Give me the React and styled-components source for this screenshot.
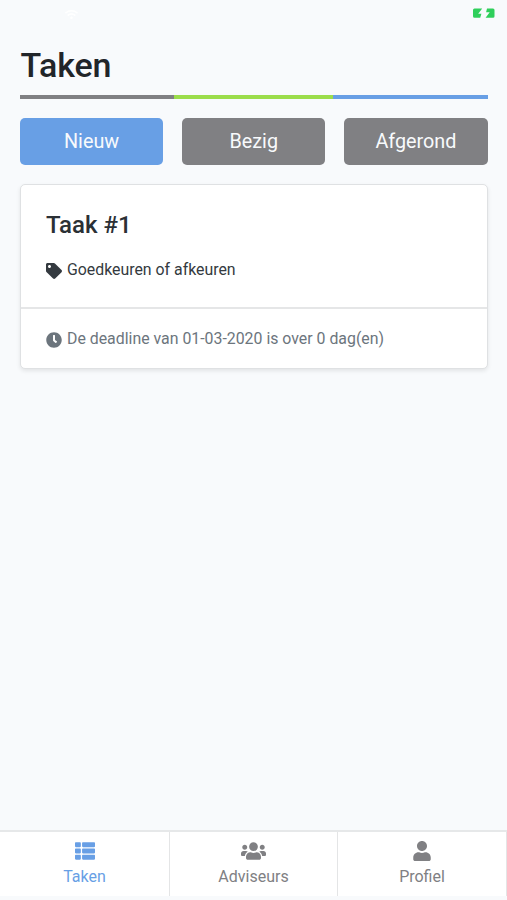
import React from "react";
import styled, { createGlobalStyle } from "styled-components";
import { FaTag, FaClock, FaThList, FaUsers, FaUser, FaWifi } from "react-icons/fa";

const GlobalStyle = createGlobalStyle`
  * { box-sizing: border-box; }
  body { margin: 0; background: #f8fafc; font-family: Roboto, sans-serif; }
`;

const Screen = styled.div`
  display: flex;
  flex-direction: column;
  height: 900px;
  background: #f8fafc;
  color: #212529;
`;

const StatusBar = styled.div`
  display: flex;
  justify-content: space-between;
  height: 32px;
  padding: 8px 12px 0 65px;
  color: #fff;
`;

const Main = styled.main`
  flex: 1;
  padding: 12px 19.5px 0 20px;
`;

const Title = styled.h1`
  margin: 0 0 9px 0.5px;
  font-size: 34px;
  font-weight: 500;
  line-height: 42px;
  letter-spacing: -0.1px;
`;

const Stripe = styled.div`
  display: grid;
  grid-template-columns: 154px 159px 1fr;
  height: 4px;
`;

const StripePart = styled.span`
  background: ${(p) => p.$color};
`;

const Filters = styled.div`
  display: grid;
  grid-template-columns: repeat(3, 1fr);
  gap: 19px;
  margin: 19px 0;
`;

const FilterButton = styled.button`
  height: 47px;
  padding: 0 0 1px;
  border: 0;
  border-radius: 5px;
  background: ${(p) => (p.$active ? "#689fe5" : "#808083")};
  color: #f8fafc;
  font: 400 19.8px Roboto, sans-serif;
`;

const Card = styled.article`
  height: 185px;
  border: 1px solid #dfe1e3;
  border-radius: 5px;
  background: #fff;
  box-shadow: 0 2px 4px rgba(0, 0, 0, 0.09);
`;

const CardBody = styled.div`
  height: 124px;
  padding: 25px 25px 0;
  border-bottom: 2px solid #e5e6e7;
`;

const CardTitle = styled.h2`
  margin: 0 0 20px;
  color: #2b3035;
  font-size: 24px;
  font-weight: 500;
  line-height: 30px;
`;

const IconLine = styled.div`
  display: flex;
  align-items: center;
  gap: 5px;
  font-size: 15.87px;
  line-height: 20px;
  color: ${(p) => p.$color};

  svg { flex: none; margin-top: 2px; }
`;

const CardFooter = styled.div`
  padding: 20px 25px;
`;

const TabBar = styled.nav`
  display: grid;
  grid-template-columns: 170px 168px 1fr;
  height: 70px;
  padding-bottom: 4px;
  border-top: 2px solid #e6e8e9;
`;

const Tab = styled.a`
  display: flex;
  flex-direction: column;
  align-items: center;
  padding-top: 9px;
  border-right: 1.5px solid #e4e5e6;
  background: #fff;
  color: ${(p) => (p.$active ? "#689fe5" : "#808083")};
  font-size: 16px;
  line-height: 20px;

  svg { display: block; margin-bottom: 6px; height: 20px; }
`;

const tabs = [
  { label: "Taken", icon: FaThList, size: 20, active: true },
  { label: "Adviseurs", icon: FaUsers, size: 25 },
  { label: "Profiel", icon: FaUser, size: 20 },
];

function ChargingBattery() {
  return (
    <svg width="23" height="11" viewBox="0 0 23 11" fill="#2fcf5b" aria-hidden="true">
      <path d="M2.5.5H10.2L6.2 5.8H9.4L8.2 9.7H2.5Q1 9.7 1 8.2V2Q1 .5 2.5 .5Z" />
      <path d="M15 .5H21Q22.5.5 22.5 2V8.2Q22.5 9.7 21 9.7H13.6L17.7 4.3H14.1Z" />
    </svg>
  );
}

export default function App() {
  return (
    <Screen>
      <GlobalStyle />
      <StatusBar>
        <FaWifi size={13} />
        <ChargingBattery />
      </StatusBar>
      <Main>
        <Title>Taken</Title>
        <Stripe>
          <StripePart $color="#808083" />
          <StripePart $color="#9bdd4b" />
          <StripePart $color="#689fe5" />
        </Stripe>
        <Filters>
          <FilterButton $active>Nieuw</FilterButton>
          <FilterButton>Bezig</FilterButton>
          <FilterButton>Afgerond</FilterButton>
        </Filters>
        <Card>
          <CardBody>
            <CardTitle>Taak #1</CardTitle>
            <IconLine $color="#343a40">
              <FaTag size={16} />
              Goedkeuren of afkeuren
            </IconLine>
          </CardBody>
          <CardFooter>
            <IconLine $color="#6c757d">
              <FaClock size={16} />
              De deadline van 01-03-2020 is over 0 dag(en)
            </IconLine>
          </CardFooter>
        </Card>
      </Main>
      <TabBar>
        {tabs.map(({ label, icon: Icon, size, active }) => (
          <Tab key={label} $active={active}>
            <Icon size={size} />
            {label}
          </Tab>
        ))}
      </TabBar>
    </Screen>
  );
}
